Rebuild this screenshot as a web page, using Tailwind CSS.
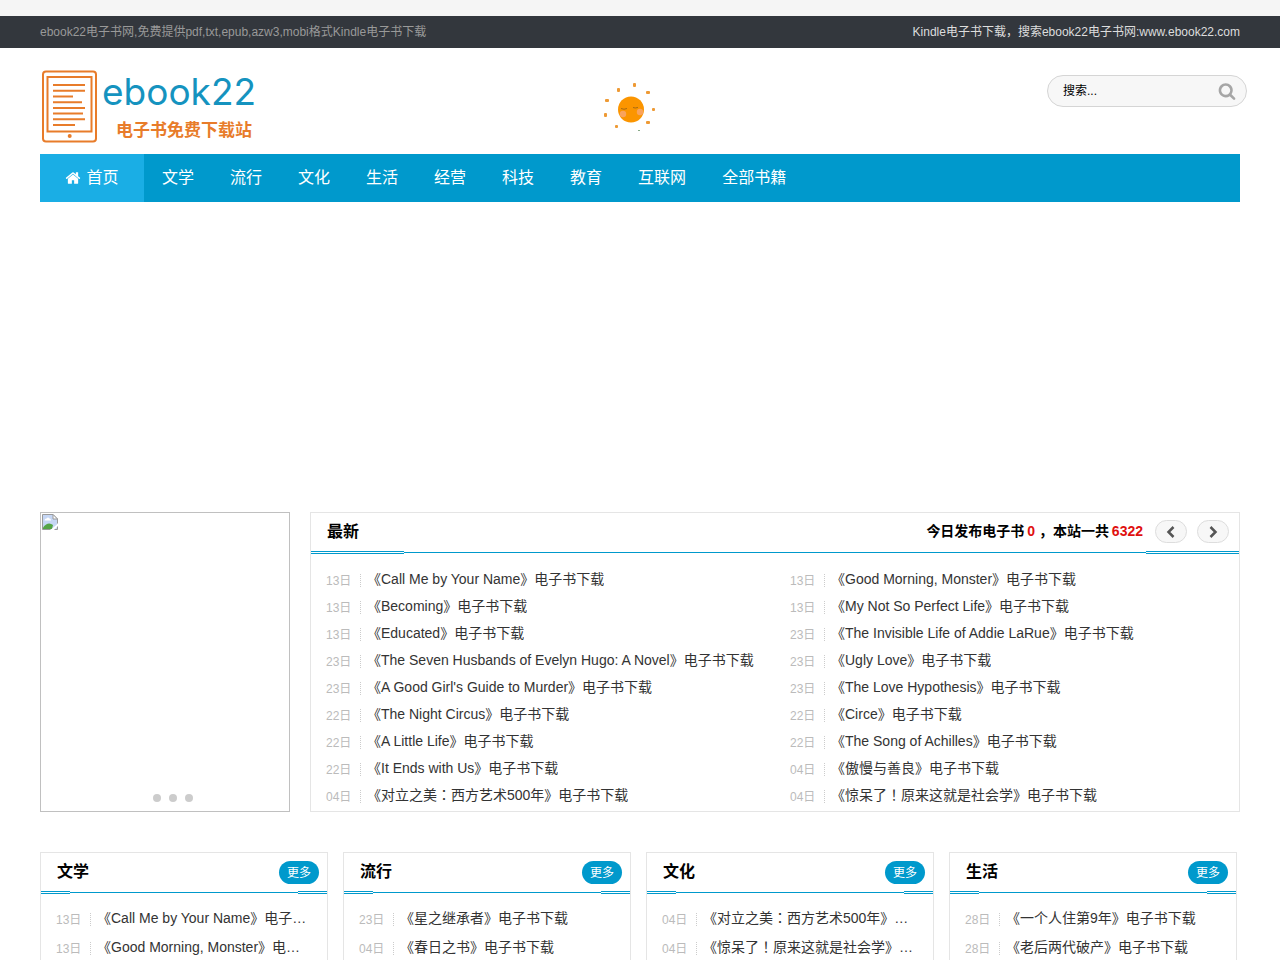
<!DOCTYPE html>
<html lang="zh-CN">
<head>
<meta charset="utf-8">
<meta name="viewport" content="width=device-width, initial-scale=1">
<title>ebook22电子书网</title>
<script src="https://cdn.jsdelivr.net/npm/@tailwindcss/browser@4"></script>
</head>
<body class="bg-white pt-4 font-['Liberation_Sans','Noto_Sans_CJK_SC',sans-serif] text-sm text-[#333] shadow-[inset_0_16px_0_#f5f5f5]">
<div class="bg-[#33373d] px-10">
  <div class="mx-auto flex h-8 max-w-[1200px] items-center justify-between text-xs">
    <p class="text-[#999]">ebook22电子书网,免费提供pdf,txt,epub,azw3,mobi格式Kindle电子书下载</p>
    <p class="text-[#ddd]">Kindle电子书下载，搜索ebook22电子书网:www.ebook22.com</p>
  </div>
</div>

<header class="px-10">
  <div class="mx-auto grid h-[106px] max-w-[1200px] grid-cols-3 items-start">
    <a href="#" class="flex pt-[22px] pl-0.5" aria-label="ebook22 电子书免费下载站">
      <svg class="h-[74px] w-14 shrink-0" viewBox="0 0 56 74" fill="none" stroke="#e87c2a" stroke-width="2">
        <rect x="1" y="1.500" width="53" height="70" rx="3"/>
        <rect x="5.500" y="7" width="44" height="54.500"/>
        <path d="M11 15H43M11 20.700H43M11 26.500H31M11 32.300H40M11 38H43M11 43.500H41M11 49.300H43M11 55H33"/>
        <circle cx="27.700" cy="66" r="2" fill="#e87c2a" stroke="none"/>
      </svg>
      <span class="flex flex-col pl-1">
        <span class="font-[Inter] text-[37px] leading-[44px] text-[#1593bf]">ebook22</span>
        <span class="pl-3.5 text-[17px] leading-[34px] font-bold text-[#e87c2a]">电子书免费下载站</span>
      </span>
    </a>
    <svg class="mt-8 ml-40 h-[54px] w-14" viewBox="0 0 56 54" fill="#ee9a35">
      <circle cx="31" cy="29.500" r="13" fill="#fb9500"/>
      <circle cx="23" cy="34" r="3.200" fill="#f9a35c"/><circle cx="40" cy="32" r="3.200" fill="#f9a35c"/>
      <path d="M21 28.500q3 1.500 6 0M33 27.500q2 1 5 0" fill="none" stroke="#a86a12"/>
      <rect x="33" y="3" width="3" height="4" rx="1"/><rect x="17" y="8" width="3" height="4" rx="1"/>
      <rect x="46" y="11" width="4" height="3" rx="1"/><rect x="5" y="19" width="4" height="3" rx="1"/>
      <rect x="52" y="28" width="3" height="3" rx="1"/><rect x="4" y="33" width="3" height="4" rx="1"/>
      <rect x="46" y="41" width="4" height="3" rx="1"/><rect x="15" y="45" width="3" height="3" rx="1"/>
      <rect x="38" y="50" width="2" height="1" fill="#8a8"/>
    </svg>
    <form class="mt-[27px] -mr-[7px] flex h-8 w-[200px] items-center justify-self-end rounded-full border border-[#d5d5d5] bg-[#f7f7f7] pr-2.5 pl-[15px]">
      <input type="text" aria-label="搜索" value="搜索..." class="w-full min-w-0 flex-1 text-xs text-black outline-none">
      <button type="button" aria-label="提交搜索">
        <svg class="size-[18px]" viewBox="0 0 1792 1792" fill="#a6a6a6"><path d="M1216 832q0-185-131.500-316.500t-316.500-131.500-316.500 131.500-131.500 316.500 131.500 316.500 316.500 131.500 316.500-131.500 131.500-316.500zm512 832q0 52-38 90t-90 38q-54 0-90-38l-343-342q-179 124-399 124-143 0-273.500-55.500t-225-150-150-225-55.500-273.500 55.500-273.500 150-225 225-150 273.500-55.500 273.500 55.500 225 150 150 225 55.500 273.500q0 220-124 399l343 343q37 37 37 90z"/></svg>
      </button>
    </form>
  </div>
  <nav class="mx-auto flex h-12 max-w-[1200px] bg-[#0099cc] text-base leading-[48px] text-white">
    <a href="#" class="flex w-[104px] items-center justify-center gap-[5px] bg-[#1aaee5]">
      <svg class="size-4" viewBox="0 0 1792 1792" fill="#fff"><path d="M1472 992v480q0 26-19 45t-45 19h-384v-384h-256v384h-384q-26 0-45-19t-19-45v-480q0-1 .5-3t.5-3l575-474 575 474q1 2 1 6zm223-69l-62 74q-8 9-21 11h-3q-13 0-21-7l-692-577-692 577q-12 8-24 7-13-2-21-11l-62-74q-8-10-7-23.500t11-21.500l719-599q32-26 76-26t76 26l244 204v-195q0-14 9-23t23-9h192q14 0 23 9t9 23v408l219 182q10 8 11 21.500t-7 23.500z"/></svg>
      首页</a>
    <a href="#" class="px-[18px]">文学</a>
    <a href="#" class="px-[18px]">流行</a>
    <a href="#" class="px-[18px]">文化</a>
    <a href="#" class="px-[18px]">生活</a>
    <a href="#" class="px-[18px]">经营</a>
    <a href="#" class="px-[18px]">科技</a>
    <a href="#" class="px-[18px]">教育</a>
    <a href="#" class="px-[18px]">互联网</a>
    <a href="#" class="px-[18px]">全部书籍</a>
  </nav>
</header>

<main class="px-10 pt-[310px]">
  <div class="mx-auto max-w-[1200px]">
    <div class="flex gap-5">
      <div class="flex w-[250px] shrink-0 flex-col justify-between border border-[#c0c0c0] p-px">
        <svg class="size-4" viewBox="0 0 16 16"><path d="M.5.5H11L15.500 5V15.500H.5Z" fill="#c6d7f5"/><path d="M2.500 6.500Q2.500 4.500 4.500 4.500Q6 2.500 7.500 4.500Q9 4.500 9 6.500Z" fill="#fff"/><path d="M1 15V13.500Q6 7 11 11L10 15Z" fill="#55a547"/><path d="M8.500 16L16 9.500V12L12 16Z" fill="#fff"/><path d="M8.500 15.500H.5V.5H11L15.500 5V9.500M12.500 15.500H15.500V12.500" fill="none" stroke="#9a9a9a"/><path d="M11 .5V5H15.500Z" fill="#fff" stroke="#9a9a9a"/></svg>
        <div class="flex justify-center gap-2 pb-2 pl-4">
          <button type="button" aria-label="第1张" class="size-2 rounded-full bg-[#ccc]"></button>
          <button type="button" aria-label="第2张" class="size-2 rounded-full bg-[#ccc]"></button>
          <button type="button" aria-label="第3张" class="size-2 rounded-full bg-[#ccc]"></button>
        </div>
      </div>
      <section class="min-w-0 flex-1 border border-[#e5e5e5]">
        <div class="flex h-[38px] items-center pr-2.5 pb-px pl-4 text-black">
          <h2 class="flex-1 text-base font-bold">最新</h2>
          <p class="mr-3 pb-0.5 font-bold">今日发布电子书 <span class="-ml-px text-[#e01010]">0</span> ，本站一共 <span class="-ml-px text-[#e01010]">6322</span></p>
          <button type="button" aria-label="上一页" class="mr-2.5 flex h-[23px] w-8 items-center justify-center rounded-full border border-[#ddd] bg-[#f7f7f7]"><svg class="size-3" viewBox="0 0 12 12" fill="none" stroke="#555" stroke-width="2.500"><path d="M8.500 1L3.500 6L8.500 11"/></svg></button>
          <button type="button" aria-label="下一页" class="flex h-[23px] w-8 items-center justify-center rounded-full border border-[#ddd] bg-[#f7f7f7]"><svg class="size-3" viewBox="0 0 12 12" fill="none" stroke="#555" stroke-width="2.500"><path d="M3.500 1L8.500 6L3.500 11"/></svg></button>
        </div>
        <div class="flex items-center"><i class="grid w-1/10 gap-px"><b class="h-px bg-[#0099cc]"></b><b class="h-px bg-[#0099cc]"></b></i><i class="h-px flex-1 bg-[#0099cc]"></i><i class="grid w-1/10 gap-px"><b class="h-px bg-[#0099cc]"></b><b class="h-px bg-[#0099cc]"></b></i></div>
        <div id="latest" class="grid grid-cols-2 pt-[11px] pb-[3px]"></div>
      </section>
    </div>
    <div id="cats" class="mt-10 grid grid-cols-4 gap-[15px] pr-[3px]"></div>
  </div>
</main>

<script>
// The full-width colon and exclamation mark are set centred in their cell.
const punct = s => s.replace(/[：！]/g, m => `<span lang="zh-TW" class="font-['Noto_Sans_CJK_TC',sans-serif]">${m}</span>`);
const row = (date, title, height) =>
  `<div class="flex ${height} items-center px-[15px]">
    <time class="w-[34px] shrink-0 pt-1 text-xs text-[#bbb]">${date}日</time>
    <i class="mt-1 h-[13px] shrink-0 border-l border-dotted border-[#ccc]"></i>
    <a href="#" class="ml-1.5 truncate">${punct(title)}</a>
  </div>`;
const suffix = '电子书下载';
const latest = [
  ['13','Call Me by Your Name'],['13','Good Morning, Monster'],
  ['13','Becoming'],['13','My Not So Perfect Life'],
  ['13','Educated'],['23','The Invisible Life of Addie LaRue'],
  ['23','The Seven Husbands of Evelyn Hugo: A Novel'],['23','Ugly Love'],
  ['23',"A Good Girl's Guide to Murder"],['23','The Love Hypothesis'],
  ['22','The Night Circus'],['22','Circe'],
  ['22','A Little Life'],['22','The Song of Achilles'],
  ['22','It Ends with Us'],['04','傲慢与善良'],
  ['04','对立之美：西方艺术500年'],['04','惊呆了！原来这就是社会学']
];
document.getElementById('latest').innerHTML =
  latest.map(([d, t]) => row(d, `《${t}》${suffix}`, 'h-[27px]')).join('');

const cats = [
  ['文学', ['13','Call Me by Your Name'], ['13','Good Morning, Monster']],
  ['流行', ['23','星之继承者'], ['04','春日之书']],
  ['文化', ['04','对立之美：西方艺术500年'], ['04','惊呆了！原来这就是社会学']],
  ['生活', ['28','一个人住第9年'], ['28','老后两代破产']]
];
document.getElementById('cats').innerHTML = cats.map(([name, ...rows]) =>
  `<section class="min-w-0 border border-[#e5e5e5] pb-4">
    <div class="flex h-[38px] items-center justify-between pr-2 pl-4">
      <h2 class="text-base font-bold text-black">${name}</h2>
      <a href="#" class="h-[23px] w-10 rounded-full bg-[#0099cc] text-center text-xs leading-6 text-white">更多</a>
    </div>
    <div class="flex items-center"><i class="grid w-1/10 gap-px"><b class="h-px bg-[#0099cc]"></b><b class="h-px bg-[#0099cc]"></b></i><i class="h-px flex-1 bg-[#0099cc]"></i><i class="grid w-1/10 gap-px"><b class="h-px bg-[#0099cc]"></b><b class="h-px bg-[#0099cc]"></b></i></div>
    <div class="pt-[9px] pr-1">${rows.map(([d, t]) => row(d, `《${t}》${suffix}`, 'h-[29px]')).join('')}</div>
  </section>`).join('');
</script>
</body>
</html>
